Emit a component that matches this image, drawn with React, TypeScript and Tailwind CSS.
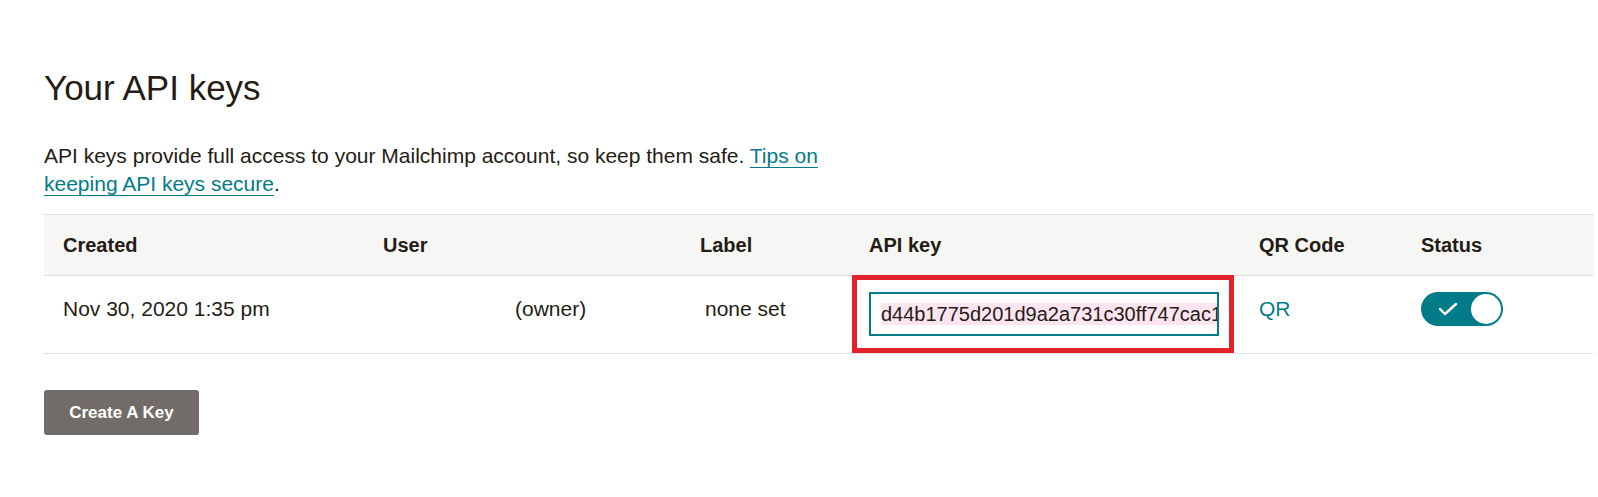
import React from 'react';

const cols = ['w-[320px]', 'w-[317px]', 'w-[169px]', 'w-[390px]', 'w-[162px]', 'w-[192px]'];
const headers = ['Created', 'User', 'Label', 'API key', 'QR Code', 'Status'];

function Toggle() {
  return (
    <div className="relative w-[82px] h-[34px] rounded-full bg-[#007c89] flex items-center">
      <svg className="ml-[17px]" width="20" height="14" viewBox="0 0 20 14" fill="none">
        <polyline points="2,7 7,12 18,2" stroke="white" strokeWidth="2.4" strokeLinecap="round" strokeLinejoin="round" />
      </svg>
      <div className="absolute right-[2px] top-[2px] w-[30px] h-[30px] rounded-full bg-white" />
    </div>
  );
}

export default function App() {
  return (
    <div
      className="min-h-[497px] bg-white pl-[44px] pt-[68px] text-[#241c15]"
      style={{ fontFamily: '"Liberation Sans", Arial, sans-serif' }}
    >
      <h1 className="text-[35px] leading-[40px] font-normal">Your API keys</h1>

      <p className="mt-[34px] text-[21px] leading-[28px] whitespace-nowrap">
        API keys provide full access to your Mailchimp account, so keep them safe.{' '}
        <a href="#" className="text-[#007c89] underline decoration-1 underline-offset-[4px]">
          Tips on
          <br />
          keeping API keys secure
        </a>
        .
      </p>

      <div className="mt-[16px] w-[1550px]">
        <div className="flex h-[62px] items-center bg-[#f6f6f4] border-y border-[#e2e1de]">
          {headers.map((h, i) => (
            <div key={h} className={`${cols[i]} pl-[19px] text-[20px] leading-[27px] font-bold`}>
              {h}
            </div>
          ))}
        </div>

        <div className="flex h-[78px] border-b border-dotted border-[#cfcfcf] text-[21px] leading-[27px]">
          <div className={`${cols[0]} pl-[19px] pt-[19px]`}>Nov 30, 2020 1:35 pm</div>
          <div className={`${cols[1]} pl-[151px] pt-[19px]`}>(owner)</div>
          <div className={`${cols[2]} pl-[24px] pt-[19px]`}>none set</div>
          <div className={`${cols[3]} pl-[2px]`}>
            <div className="-mt-px h-[78px] w-[382px] border-[5px] border-[#e3232a]">
              <div className="ml-[12px] mt-[12px] h-[44px] w-[350px] border-2 border-[#007c89] overflow-hidden whitespace-nowrap pl-[10px] pt-[9px] text-[20px] leading-[23px]">
                <span className="bg-[#fde4f1]">d44b1775d201d9a2a731c30ff747cac1-us2</span>
              </div>
            </div>
          </div>
          <div className={`${cols[4]} pl-[19px] pt-[19px]`}>
            <a href="#" className="text-[#007c89]">QR</a>
          </div>
          <div className={`${cols[5]} pl-[19px] pt-[16px]`}>
            <Toggle />
          </div>
        </div>
      </div>

      <button className="mt-[36px] h-[45px] w-[155px] rounded-[3px] bg-[#716c68] text-white text-[17px] font-bold">
        Create A Key
      </button>
    </div>
  );
}
